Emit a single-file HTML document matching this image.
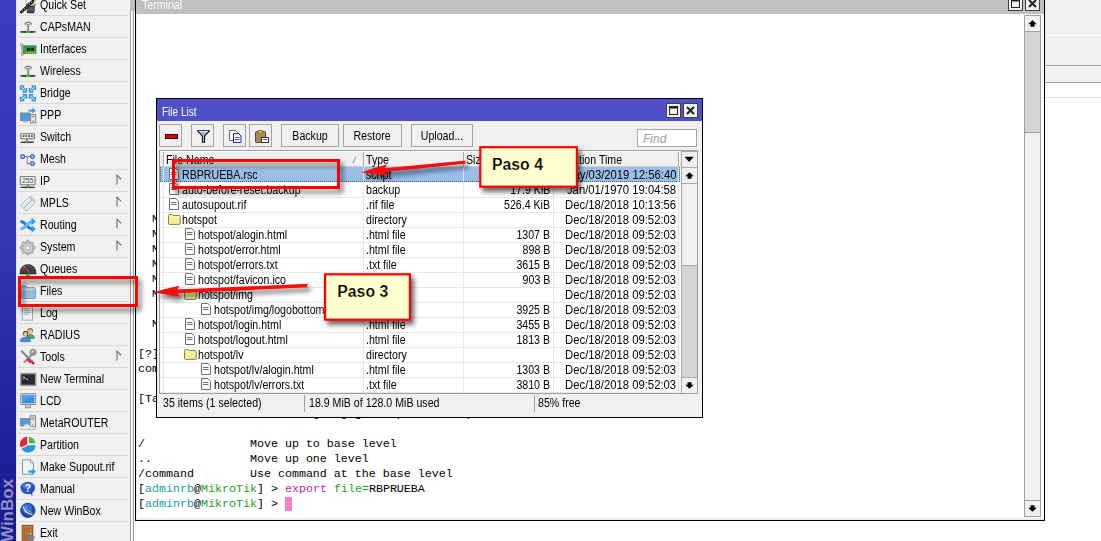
<!DOCTYPE html>
<html><head><meta charset="utf-8"><style>*{box-sizing:border-box}
html,body{margin:0;padding:0}
body{width:1101px;height:541px;overflow:hidden;position:relative;background:#fff;font-family:"Liberation Sans",sans-serif;font-size:12px;color:#000}
.a{position:absolute}
.t,.tr,.td{display:inline-block;white-space:nowrap;transform:scaleX(.885);transform-origin:0 0}
.tr{transform-origin:100% 0}
.td{transform:scaleX(.94);transform-origin:100% 0}
#bar{left:0;top:0;width:16px;height:541px;background:linear-gradient(#3c3cc2,#3535b4 45%,#2020a0 80%,#1a1a8a)}
#menu{left:16px;top:0;width:114px;height:541px;background:#f0f0f0;overflow:hidden;border-left:1px solid #e4e4ee}
.mi{position:absolute;left:0;width:114px;height:22px}
.ic{position:absolute;left:3px;top:4px;width:16px;height:16px}
.ic svg{display:block}
.mt{position:absolute;left:23px;top:1px;line-height:22px;white-space:nowrap}
.arr{position:absolute;left:99px;top:5px}
.sep{position:absolute;left:1px;width:110px;height:1px;background:#d9d9d9}
#term{left:135px;top:-1px;width:910px;height:522px;border:1px solid #000;background:#fff}
#ttitle{left:0;top:0;width:908px;height:14px;background:#c0c0c0;color:#fff}
pre.tt{position:absolute;left:2px;top:212px;margin:0;font-family:"Liberation Mono",monospace;font-size:11.67px;line-height:15px;color:#000}
.u{color:#14a0a0}.h{color:#1aa01a}.m{color:#c020c0}.k{color:#000}
.cur{background:#ff80c8}
#fl{left:156px;top:98px;width:547px;height:320px;border:1px solid #000;background:#f0f0f0}
#fltitle{left:0;top:0;width:545px;height:22px;background:#5050c8;color:#fff}
.btn{position:absolute;top:25px;height:23px;border:1px solid #a4a4a4;background:#f0f0f0;text-align:center;line-height:23px}
#list{left:2px;top:51px;width:539px;height:244px;border:1px solid #a0a0a0;background:#fff;overflow:hidden}
.row{position:absolute;left:0;width:519px;height:14px;line-height:14px;white-space:nowrap}
.c{position:absolute;top:0}
.fi{position:absolute}
.fi svg{display:block}
.tp{left:206px}
.sz{left:310px;width:80px;text-align:right}
.dt{left:316px;width:200px;text-align:right}
#status{left:2px;top:294px;width:539px;height:20px}

</style></head><body>
<div id="bar" class="a"></div>
<svg class="a" style="left:0;top:0" width="16" height="541" viewBox="0 0 16 541"><text transform="translate(13.4 542) rotate(-90)" font-family="Liberation Sans" font-weight="bold" font-size="17" fill="#8e8ec4">WinBox</text></svg>
<div class="a" style="left:16px;top:0;width:1px;height:541px;background:#fafafa"></div>
<div id="menu" class="a"><div class="mi" style="top:-7px"><span class="ic"><svg width="16" height="16" viewBox="0 0 16 16" style="overflow:visible"><path d="M6.2 7.8h9.2l-0.8 1v6.2q-0.2 1.2-1.4 1.2h-5q-1.2 0-1.4-1.2V8.8z" fill="#2e2e2e"/><ellipse cx="10.8" cy="7.8" rx="5" ry="1.3" fill="#cfcfcf" stroke="#333" stroke-width="0.6"/><rect x="7.2" y="10" width="7.2" height="4.6" fill="#565656"/><path d="M1.2 15.2L13.8 3.2" stroke="#111" stroke-width="2.6" stroke-linecap="round"/><path d="M1.8 14.6L13.2 3.8" stroke="#eee" stroke-width="0.9" stroke-dasharray="1.6 1.6"/><path d="M6 2.5l0.5 1 1 0.3-1 0.4-0.5 1-0.5-1-1-0.4 1-0.3z" fill="#e8c030"/><circle cx="15" cy="3.6" r="0.9" fill="#e8c030"/><circle cx="10" cy="1.8" r="0.6" fill="#e8c030"/></svg></span><span class="mt"><span class="t">Quick Set</span></span></div><div class="sep" style="top:15px"></div><div class="mi" style="top:15px"><span class="ic"><svg width="16" height="16" viewBox="0 0 16 16" style="overflow:visible"><path d="M4.6 5.4Q8.2 1 11.8 5.4" fill="none" stroke="#777" stroke-width="1.3"/><path d="M6.2 6.6Q8.2 4.4 10.2 6.6" fill="none" stroke="#888" stroke-width="1.1"/><rect x="7.5" y="6.6" width="1.4" height="6.2" fill="#6a6a6a"/><path d="M0.4 12.9Q8.2 11.8 15.4 12.9Q8.2 14 0.4 12.9z" fill="#222" stroke="#222" stroke-width="0.8"/><ellipse cx="8.2" cy="12.7" rx="2.4" ry="1.5" fill="#28c028"/></svg></span><span class="mt"><span class="t">CAPsMAN</span></span></div><div class="sep" style="top:37px"></div><div class="mi" style="top:37px"><span class="ic"><svg width="16" height="16" viewBox="0 0 16 16" style="overflow:visible"><path d="M0.5 3h2.5v11.5h-1.5V4.5h-1z" fill="#d8d8d8" stroke="#8a8a8a" stroke-width="0.7"/><rect x="3.5" y="4.8" width="12.5" height="7.8" fill="#30a040" stroke="#1a6a25" stroke-width="0.6"/><rect x="6.8" y="6.8" width="3.2" height="3" fill="#1a2a2a"/><rect x="10.8" y="6.8" width="3.2" height="3" fill="#1a2a2a"/><path d="M5.8 12h1.2M7.8 12h1.2M9.8 12h1.2M11.8 12h1.2M13.8 12h1.2" stroke="#e0c040" stroke-width="1.4"/></svg></span><span class="mt"><span class="t">Interfaces</span></span></div><div class="sep" style="top:59px"></div><div class="mi" style="top:59px"><span class="ic"><svg width="16" height="16" viewBox="0 0 16 16" style="overflow:visible"><path d="M4.6 5.4Q8.2 1 11.8 5.4" fill="none" stroke="#777" stroke-width="1.3"/><path d="M6.2 6.6Q8.2 4.4 10.2 6.6" fill="none" stroke="#888" stroke-width="1.1"/><rect x="7.5" y="6.6" width="1.4" height="6.2" fill="#6a6a6a"/><path d="M0.4 12.9Q8.2 11.8 15.4 12.9Q8.2 14 0.4 12.9z" fill="#222" stroke="#222" stroke-width="0.8"/><ellipse cx="8.2" cy="12.7" rx="2.4" ry="1.5" fill="#28c028"/></svg></span><span class="mt"><span class="t">Wireless</span></span></div><div class="sep" style="top:81px"></div><div class="mi" style="top:81px"><span class="ic"><svg width="16" height="16" viewBox="0 0 16 16" style="overflow:visible"><g transform="translate(0 0.6) scale(0.86)"><path d="M0.3 0.3h4.6l-1.3 1.3 2.8 2.8 1.3-1.3v4.6h-4.6l1.3-1.3-2.8-2.8-1.3 1.3z" fill="#58c0f4" stroke="#1a6ec8" stroke-width="0.9" stroke-linejoin="round"/><path d="M1.6 1.6L5.8 5.8" stroke="#b8ecff" stroke-width="1"/></g><g transform="translate(15.8 0.6) scale(-0.86 0.86)"><path d="M0.3 0.3h4.6l-1.3 1.3 2.8 2.8 1.3-1.3v4.6h-4.6l1.3-1.3-2.8-2.8-1.3 1.3z" fill="#58c0f4" stroke="#1a6ec8" stroke-width="0.9" stroke-linejoin="round"/><path d="M1.6 1.6L5.8 5.8" stroke="#b8ecff" stroke-width="1"/></g><g transform="translate(0 16.2) scale(0.86 -0.86)"><path d="M0.3 0.3h4.6l-1.3 1.3 2.8 2.8 1.3-1.3v4.6h-4.6l1.3-1.3-2.8-2.8-1.3 1.3z" fill="#58c0f4" stroke="#1a6ec8" stroke-width="0.9" stroke-linejoin="round"/><path d="M1.6 1.6L5.8 5.8" stroke="#b8ecff" stroke-width="1"/></g><g transform="translate(15.8 16.2) scale(-0.86 -0.86)"><path d="M0.3 0.3h4.6l-1.3 1.3 2.8 2.8 1.3-1.3v4.6h-4.6l1.3-1.3-2.8-2.8-1.3 1.3z" fill="#58c0f4" stroke="#1a6ec8" stroke-width="0.9" stroke-linejoin="round"/><path d="M1.6 1.6L5.8 5.8" stroke="#b8ecff" stroke-width="1"/></g></svg></span><span class="mt"><span class="t">Bridge</span></span></div><div class="sep" style="top:103px"></div><div class="mi" style="top:103px"><span class="ic"><svg width="16" height="16" viewBox="0 0 16 16" style="overflow:visible"><rect x="0.5" y="6" width="9.5" height="7.5" fill="#4a9ee0" stroke="#8a8a8a" stroke-width="1"/><rect x="3" y="13.5" width="4.5" height="1.8" fill="#aaa"/><rect x="10.5" y="7.5" width="5.3" height="8.5" fill="#e4e4e4" stroke="#777" stroke-width="0.8"/><rect x="11.5" y="9" width="3" height="1" fill="#888"/><circle cx="13" cy="14.3" r="0.8" fill="#2b2"/><path d="M8.5 3.6h4.8" stroke="#3a9ae8" stroke-width="2"/><path d="M12.3 0.8l3.6 2.8-3.6 2.8z" fill="#3a9ae8"/></svg></span><span class="mt"><span class="t">PPP</span></span></div><div class="sep" style="top:125px"></div><div class="mi" style="top:125px"><span class="ic"><svg width="16" height="16" viewBox="0 0 16 16" style="overflow:visible"><rect x="0.8" y="4.8" width="13.6" height="5" rx="0.8" fill="#f4f4f4" stroke="#6a6a6a" stroke-width="1.1"/><g fill="#2a2a2a"><rect x="2.6" y="6.3" width="1.8" height="1.5"/><rect x="5.4" y="6.3" width="1.8" height="1.5"/><rect x="8.2" y="6.3" width="1.8" height="1.5"/><rect x="11" y="6.3" width="1.8" height="1.5"/></g><rect x="6.6" y="9.8" width="1" height="2.6" fill="#444"/><path d="M0.6 13.2Q7.1 12.2 13.8 13.2Q7.1 14.2 0.6 13.2z" fill="#222" stroke="#222" stroke-width="0.7"/><circle cx="7.1" cy="13" r="1.3" fill="#28c028"/></svg></span><span class="mt"><span class="t">Switch</span></span></div><div class="sep" style="top:147px"></div><div class="mi" style="top:147px"><span class="ic"><svg width="16" height="16" viewBox="0 0 16 16" style="overflow:visible"><path d="M2.4 5.6h10M7.1 5.6v7h5.3" stroke="#8a8a8a" fill="none" stroke-width="1.1"/><g fill="#9ab0f0" stroke="#3050c8" stroke-width="1"><circle cx="2.6" cy="5.6" r="2.1"/><circle cx="12.4" cy="5.6" r="2.1"/><circle cx="12.4" cy="12.6" r="2.1"/></g></svg></span><span class="mt"><span class="t">Mesh</span></span></div><div class="sep" style="top:169px"></div><div class="mi" style="top:169px"><span class="ic"><svg width="16" height="16" viewBox="0 0 16 16" style="overflow:visible"><rect x="0.3" y="3.5" width="14.8" height="8.2" rx="0.8" fill="#f4f4f4" stroke="#7a7a7a" stroke-width="1.1"/><text x="7.7" y="9.9" font-size="7.2" text-anchor="middle" fill="#4a4a4a" font-family="Liberation Sans" letter-spacing="-0.2">255</text><rect x="7.2" y="11.7" width="1" height="2" fill="#444"/><path d="M0.5 14.3Q7.7 13.4 15 14.3Q7.7 15.2 0.5 14.3z" fill="#222" stroke="#222" stroke-width="0.7"/><circle cx="7.7" cy="14.1" r="1.2" fill="#28c028"/></svg></span><span class="mt"><span class="t">IP</span></span><svg class="arr" width="8" height="12" viewBox="0 0 8 12"><path d="M5 5.3L1 10.3" stroke="#fff" stroke-width="1"/><path d="M1 0.5v10M0.8 0.8l4.3 4.5" fill="none" stroke="#6a6a6a" stroke-width="1.1"/></svg></div><div class="sep" style="top:191px"></div><div class="mi" style="top:191px"><span class="ic"><svg width="16" height="16" viewBox="0 0 16 16" style="overflow:visible"><g fill="#e4f0f0" stroke="#98a8a8" stroke-width="0.8"><path d="M0.6 10.4L8.8 2.2l2.8-0.6 0.6 0.6-0.6 2.8-8.2 8.2z"/><path d="M3.6 13.4L11.8 5.2l2.8-0.6 0.6 0.6-0.6 2.8-8.2 8.2z"/></g><circle cx="10.6" cy="2.8" r="0.6" fill="#888"/><circle cx="13.6" cy="5.8" r="0.6" fill="#888"/></svg></span><span class="mt"><span class="t">MPLS</span></span><svg class="arr" width="8" height="12" viewBox="0 0 8 12"><path d="M5 5.3L1 10.3" stroke="#fff" stroke-width="1"/><path d="M1 0.5v10M0.8 0.8l4.3 4.5" fill="none" stroke="#6a6a6a" stroke-width="1.1"/></svg></div><div class="sep" style="top:213px"></div><div class="mi" style="top:213px"><span class="ic"><svg width="16" height="16" viewBox="0 0 16 16" style="overflow:visible"><path d="M0.5 4.5C6 4.5 7.5 12 12.5 12" stroke="#1a80e0" stroke-width="3" fill="none"/><path d="M0.5 12C6 12 7.5 4.5 12.5 4.5" stroke="#60b8f8" stroke-width="3" fill="none"/><path d="M11.5 0.8l4.5 3.7-4.5 3.7z" fill="#3a9af0"/><path d="M11.5 8.3l4.5 3.7-4.5 3.7z" fill="#3a9af0"/></svg></span><span class="mt"><span class="t">Routing</span></span><svg class="arr" width="8" height="12" viewBox="0 0 8 12"><path d="M5 5.3L1 10.3" stroke="#fff" stroke-width="1"/><path d="M1 0.5v10M0.8 0.8l4.3 4.5" fill="none" stroke="#6a6a6a" stroke-width="1.1"/></svg></div><div class="sep" style="top:235px"></div><div class="mi" style="top:235px"><span class="ic"><svg width="16" height="16" viewBox="0 0 16 16" style="overflow:visible"><g transform="translate(7.7 8.7)"><circle r="5.2" fill="#c8c8c8" stroke="#8a8a8a" stroke-width="0.8"/><rect x="-1.6" y="-7.3" width="3.2" height="3" rx="0.6" fill="#c8c8c8" stroke="#8a8a8a" stroke-width="0.7" transform="rotate(0)"/><rect x="-1.6" y="-7.3" width="3.2" height="3" rx="0.6" fill="#c8c8c8" stroke="#8a8a8a" stroke-width="0.7" transform="rotate(45)"/><rect x="-1.6" y="-7.3" width="3.2" height="3" rx="0.6" fill="#c8c8c8" stroke="#8a8a8a" stroke-width="0.7" transform="rotate(90)"/><rect x="-1.6" y="-7.3" width="3.2" height="3" rx="0.6" fill="#c8c8c8" stroke="#8a8a8a" stroke-width="0.7" transform="rotate(135)"/><rect x="-1.6" y="-7.3" width="3.2" height="3" rx="0.6" fill="#c8c8c8" stroke="#8a8a8a" stroke-width="0.7" transform="rotate(180)"/><rect x="-1.6" y="-7.3" width="3.2" height="3" rx="0.6" fill="#c8c8c8" stroke="#8a8a8a" stroke-width="0.7" transform="rotate(225)"/><rect x="-1.6" y="-7.3" width="3.2" height="3" rx="0.6" fill="#c8c8c8" stroke="#8a8a8a" stroke-width="0.7" transform="rotate(270)"/><rect x="-1.6" y="-7.3" width="3.2" height="3" rx="0.6" fill="#c8c8c8" stroke="#8a8a8a" stroke-width="0.7" transform="rotate(315)"/><circle r="4.5" fill="#d0d0d0"/><circle r="1.9" fill="#fff" stroke="#888" stroke-width="0.6"/></g></svg></span><span class="mt"><span class="t">System</span></span><svg class="arr" width="8" height="12" viewBox="0 0 8 12"><path d="M5 5.3L1 10.3" stroke="#fff" stroke-width="1"/><path d="M1 0.5v10M0.8 0.8l4.3 4.5" fill="none" stroke="#6a6a6a" stroke-width="1.1"/></svg></div><div class="sep" style="top:257px"></div><div class="mi" style="top:257px"><span class="ic"><svg width="16" height="16" viewBox="0 0 16 16" style="overflow:visible"><path d="M0 11.5A8 8 0 0 1 16 11.5V13H0z" fill="#3a3e48" stroke="#1a1a1a" stroke-width="0.6"/><g fill="#bbb"><circle cx="3" cy="8" r="0.5"/><circle cx="5.2" cy="5.3" r="0.5"/><circle cx="8" cy="4.3" r="0.5"/><circle cx="10.8" cy="5.3" r="0.5"/><circle cx="13" cy="8" r="0.5"/></g><path d="M3.2 5L9.8 12" stroke="#e83030" stroke-width="1.2"/><ellipse cx="7.8" cy="14" rx="2.4" ry="1.2" fill="#28c028"/></svg></span><span class="mt"><span class="t">Queues</span></span></div><div class="sep" style="top:279px"></div><div class="mi" style="top:279px"><span class="ic"><svg width="16" height="16" viewBox="0 0 16 16" style="overflow:visible"><path d="M1.2 4.2q0-1.2 1.2-1.2h3.5l1.4 1.5h6.9q1.2 0 1.2 1.2v8.6q0 1.2-1.2 1.2h-11.8q-1.2 0-1.2-1.2z" fill="#9bbcd8" stroke="#6a8aa8" stroke-width="0.8"/><path d="M1.2 6.2h14.4" stroke="#c8dcec" stroke-width="1"/></svg></span><span class="mt"><span class="t">Files</span></span></div><div class="sep" style="top:301px"></div><div class="mi" style="top:301px"><span class="ic"><svg width="16" height="16" viewBox="0 0 16 16" style="overflow:visible"><path d="M2.3 0.5h10.2v15.2l-1.3-1-1.2 1-1.3-1-1.2 1-1.3-1-1.2 1-1.3-1-1.4 1z" fill="#eef4f4" stroke="#8a9a9a" stroke-width="0.8"/><g stroke="#a8b8c0" stroke-width="0.8"><path d="M4 3.5h6.5M4 5.5h5M4 7.5h6.5M4 9.5h4"/></g></svg></span><span class="mt"><span class="t">Log</span></span></div><div class="sep" style="top:323px"></div><div class="mi" style="top:323px"><span class="ic"><svg width="16" height="16" viewBox="0 0 16 16" style="overflow:visible"><circle cx="10.2" cy="3.8" r="2.8" fill="#a05828"/><circle cx="10.2" cy="4.4" r="2.1" fill="#f4c8a0"/><path d="M6 11.5q0-4 4.2-4 4.2 0 4.2 4z" fill="#40b060" stroke="#2a8040" stroke-width="0.6"/><circle cx="5.4" cy="6.5" r="2.6" fill="#302820"/><circle cx="5.4" cy="7.1" r="2.1" fill="#f0c098"/><path d="M0.3 14.7q0-4.5 5.1-4.5 5.1 0 5.1 4.5z" fill="#4a90d8" stroke="#2a60a8" stroke-width="0.6"/></svg></span><span class="mt"><span class="t">RADIUS</span></span></div><div class="sep" style="top:345px"></div><div class="mi" style="top:345px"><span class="ic"><svg width="16" height="16" viewBox="0 0 16 16" style="overflow:visible"><path d="M1.5 2L12.5 13" stroke="#8a8a8a" stroke-width="2.2"/><path d="M0.8 1.3l2.2 0.6-1.1 1.1z" fill="#666"/><path d="M15 2.5L4 13.5" stroke="#909090" stroke-width="2.2"/><circle cx="13" cy="3.3" r="2.6" fill="none" stroke="#909090" stroke-width="1.8"/><path d="M7.5 10L11 13.5" stroke="#e02828" stroke-width="2.8"/><path d="M11.5 12.5l2.5 2.5" stroke="#c02020" stroke-width="2.4"/></svg></span><span class="mt"><span class="t">Tools</span></span><svg class="arr" width="8" height="12" viewBox="0 0 8 12"><path d="M5 5.3L1 10.3" stroke="#fff" stroke-width="1"/><path d="M1 0.5v10M0.8 0.8l4.3 4.5" fill="none" stroke="#6a6a6a" stroke-width="1.1"/></svg></div><div class="sep" style="top:367px"></div><div class="mi" style="top:367px"><span class="ic"><svg width="16" height="16" viewBox="0 0 16 16" style="overflow:visible"><rect x="0.7" y="2.5" width="15" height="12" rx="0.6" fill="#3a3a3a" stroke="#9a9a9a" stroke-width="1.4"/><rect x="2" y="3.8" width="12.4" height="9.4" fill="#2c2c30"/><path d="M3 5.5l2 1.2-2 1.2M5.5 8h2.5" stroke="#e8e8e8" stroke-width="0.8" fill="none"/></svg></span><span class="mt"><span class="t">New Terminal</span></span></div><div class="sep" style="top:389px"></div><div class="mi" style="top:389px"><span class="ic"><svg width="16" height="16" viewBox="0 0 16 16" style="overflow:visible"><rect x="0.7" y="0.7" width="15" height="10.8" rx="0.6" fill="#d8d8d8" stroke="#8a8a8a" stroke-width="1"/><rect x="2" y="2" width="12.4" height="8.2" fill="#3c90e0"/><path d="M2 8Q8 4 14.4 5V2H2z" fill="#5aa8f0" opacity="0.6"/><rect x="5.4" y="11.4" width="5" height="3.4" fill="#c8c8c8" stroke="#888" stroke-width="0.8"/></svg></span><span class="mt"><span class="t">LCD</span></span></div><div class="sep" style="top:411px"></div><div class="mi" style="top:411px"><span class="ic"><svg width="16" height="16" viewBox="0 0 16 16" style="overflow:visible"><rect x="0.5" y="3.5" width="9" height="7" fill="#4a9ee0" stroke="#8a8a8a" stroke-width="1"/><rect x="10" y="0.8" width="5.6" height="11" fill="#e4e4e4" stroke="#777" stroke-width="0.8"/><rect x="11" y="2.3" width="3.5" height="0.9" fill="#888"/><rect x="11" y="4" width="3.5" height="0.9" fill="#888"/><circle cx="12.8" cy="10" r="0.7" fill="#2b2"/><path d="M0.6 14.4q0-3 2.8-3 0.8-2.6 3.8-2.4 2.6 0.2 3 2.4 3.2-0.4 4.4 1.6 0.8 1.4 0.8 1.4z" fill="#e8eaf0" stroke="#a0a4b0" stroke-width="0.7"/></svg></span><span class="mt"><span class="t">MetaROUTER</span></span></div><div class="sep" style="top:433px"></div><div class="mi" style="top:433px"><span class="ic"><svg width="16" height="16" viewBox="0 0 16 16" style="overflow:visible"><path d="M8.6 6.6V-0.3A7 7 0 0 1 15.5 6.6z" fill="#48b838" stroke="#fff" stroke-width="0.4"/><path d="M8.4 8.2h7.2A7.4 7.4 0 0 1 1.6 11.4z" fill="#2a98d8"/><path d="M7.2 7.4L0.8 10.6A7.4 7.4 0 0 1 7.2 -0.2z" fill="#e02838"/></svg></span><span class="mt"><span class="t">Partition</span></span></div><div class="sep" style="top:455px"></div><div class="mi" style="top:455px"><span class="ic"><svg width="16" height="16" viewBox="0 0 16 16" style="overflow:visible"><path d="M2.5 0.8h8l3 3v11.4h-11z" fill="#eef6f8" stroke="#7a8a90" stroke-width="0.9"/><path d="M10.5 0.8v3h3" fill="#fff" stroke="#7a8a90" stroke-width="0.8"/><path d="M8.5 12.5h4.5" stroke="#2a9ae8" stroke-width="2.4"/><path d="M12.3 9.6l3.7 2.9-3.7 2.9z" fill="#2a9ae8"/></svg></span><span class="mt"><span class="t">Make Supout.rif</span></span></div><div class="sep" style="top:477px"></div><div class="mi" style="top:477px"><span class="ic"><svg width="16" height="16" viewBox="0 0 16 16" style="overflow:visible"><ellipse cx="7.8" cy="7" rx="7.3" ry="6.2" fill="#2850c8"/><path d="M9.5 12l3 3.2-0.5-4z" fill="#2850c8"/><ellipse cx="7" cy="4.8" rx="5" ry="3" fill="#5a80e8" opacity="0.7"/><text x="7.8" y="10.8" font-size="10" font-weight="bold" text-anchor="middle" fill="#fff" font-family="Liberation Sans">?</text></svg></span><span class="mt"><span class="t">Manual</span></span></div><div class="sep" style="top:499px"></div><div class="mi" style="top:499px"><span class="ic"><svg width="16" height="16" viewBox="0 0 16 16" style="overflow:visible"><circle cx="7.8" cy="7.4" r="7.3" fill="#1a4aa8" stroke="#0a2a70" stroke-width="0.5"/><circle cx="7" cy="5.5" r="5" fill="#3a78d8" opacity="0.8"/><path d="M3.5 3.5Q4.5 10.5 12.5 11.5" stroke="#e8f0ff" stroke-width="1.2" fill="none"/><path d="M5.5 3Q6.5 8.5 12.5 9.5" stroke="#c8d8f0" stroke-width="0.6" fill="none"/></svg></span><span class="mt"><span class="t">New WinBox</span></span></div><div class="sep" style="top:521px"></div><div class="mi" style="top:521px"><span class="ic"><svg width="16" height="16" viewBox="0 0 16 16" style="overflow:visible"><rect x="2.2" y="0.3" width="10.7" height="16" fill="#c07838" stroke="#804818" stroke-width="0.9"/><path d="M4.5 2v13M7 2v13M9.5 2v13" stroke="#a05a20" stroke-width="0.7"/><circle cx="10.5" cy="8.5" r="0.8" fill="#f0e0a0"/><path d="M9 12.5h5.6" stroke="#2a9ae8" stroke-width="2.2"/><path d="M10.5 9.8l-3.5 2.7 3.5 2.7z" fill="#2a9ae8"/></svg></span><span class="mt"><span class="t">Exit</span></span></div><div class="sep" style="top:543px"></div></div>
<div class="a" style="left:130px;top:0;width:5px;height:11px;background:#c0c0c0"></div>
<div class="a" style="left:130px;top:11px;width:1px;height:530px;background:#a0a0a0"></div>
<div class="a" style="left:131px;top:11px;width:3px;height:530px;background:#f0f0f0;border-left:1px solid #fff"></div>
<div class="a" style="left:133px;top:11px;width:1px;height:530px;background:#a0a0a0"></div>
<div class="a" style="left:1044px;top:0;width:57px;height:541px;background:#fff"></div>
<div class="a" style="left:1044px;top:0;width:57px;height:66px;background:#f0f0f0"></div>
<div class="a" style="left:1044px;top:35px;width:57px;height:1px;background:#fff"></div>
<div class="a" style="left:1044px;top:65px;width:57px;height:1px;background:#a0a0a0"></div>
<div class="a" style="left:1044px;top:66px;width:57px;height:16px;background:#f0f0f0"></div>
<div class="a" style="left:1044px;top:82px;width:57px;height:1px;background:#a0a0a0"></div>
<div class="a" style="left:1044px;top:97px;width:57px;height:1px;background:#e0e0e0"></div>
<div id="term" class="a">
 <div id="ttitle" class="a"><span class="a t" style="left:6px;top:-2px;line-height:14px;font-size:12px">Terminal</span></div>
 <div class="a" style="left:0;top:14px;width:908px;height:506px;border-left:1px solid #ececec;border-bottom:2px solid #ececec"></div>
 <pre class="tt">  MMM      MMM       KKK                          TTTTTTTTTTT      KKK
  MMMM    MMMM       KKK                          TTTTTTTTTTT      KKK
  MMM MMMM MMM  III  KKK  KKK  RRRRRR     OOOOOO      TTT     III  KKK  KKK
  MMM  MM  MMM  III  KKKKK     RRR  RRR  OOO  OOO     TTT     III  KKKKK
  MMM      MMM  III  KKK KKK   RRRRRR    OOO  OOO     TTT     III  KKK KKK
  MMM      MMM  III  KKK  KKK  RRR  RRR   OOOOOO      TTT     III  KKK  KKK

  MikroTik RouterOS 6.42.3 (c) 1999-2018       www.mikrotik.com

[?]             Gives the list of available commands
command [?]     Gives help on the command and list of arguments

[Tab]           Completes the command/word. If the input is ambiguous,
                a second [Tab] gives possible options

/               Move up to base level
..              Move up one level
/command        Use command at the base level
<span class="k">[</span><span class="u">adminrb</span><span class="k">@</span><span class="h">MikroTik</span><span class="k">] &gt; </span><span class="m">export</span> <span class="h">file=</span>RBPRUEBA
<span class="k">[</span><span class="u">adminrb</span><span class="k">@</span><span class="h">MikroTik</span><span class="k">] &gt; </span><span class="cur"> </span></pre>
 <div class="a" style="left:888px;top:15px;width:17px;height:502px;background:#f0f0f0;border:1px solid #a0a0a0"></div>
 <div class="a" style="left:889px;top:32px;width:15px;height:101px;background:#d4d4d4;border-bottom:1px solid #a0a0a0"></div>
 <div class="a" style="left:888px;top:15px;width:17px;height:17px;background:#f0f0f0;border:1px solid #a0a0a0"></div>
 <svg class="a" style="left:892px;top:20px" width="9" height="7" viewBox="0 0 9 7"><path d="M4.5 0.2L8.8 4.2H6.5V6.8h-4V4.2H0.2z" fill="#000"/></svg>
 <div class="a" style="left:888px;top:500px;width:17px;height:17px;background:#f0f0f0;border:1px solid #a0a0a0"></div>
 <svg class="a" style="left:892px;top:505px" width="9" height="7" viewBox="0 0 9 7"><path d="M4.5 6.8L8.8 2.8H6.5V0.2h-4V2.8H0.2z" fill="#000"/></svg>
 <div class="a" style="left:872px;top:-4px;width:15px;height:15px;background:#f0f0f0;border:1px solid #404040"></div>
 <svg class="a" style="left:875px;top:-1px" width="9" height="9" viewBox="0 0 9 9"><rect x="0.5" y="0.5" width="8" height="8" fill="none" stroke="#222" stroke-width="1"/><rect x="0.5" y="0.5" width="8" height="2" fill="#222"/></svg>
 <div class="a" style="left:889px;top:-4px;width:15px;height:15px;background:#f0f0f0;border:1px solid #404040"></div>
 <svg class="a" style="left:892px;top:-1px" width="9" height="9" viewBox="0 0 9 9"><path d="M1 1L8 8M8 1L1 8" stroke="#222" stroke-width="2"/></svg>
</div>
<div id="fl" class="a">
 <div id="fltitle" class="a"><span class="a t" style="left:5px;top:6px;font-size:12.5px;line-height:14px;transform:scaleX(.8)">File List</span></div>
 <div class="btn" style="left:2px;width:23px"></div>
 <div class="btn" style="left:34px;width:23px"></div>
 <div class="btn" style="left:66px;width:23px"></div>
 <div class="btn" style="left:92px;width:23px"></div>
 <div class="btn" style="left:124px;width:58px"><span class="t" style="transform-origin:50% 0">Backup</span></div>
 <div class="btn" style="left:186px;width:59px"><span class="t" style="transform-origin:50% 0">Restore</span></div>
 <div class="btn" style="left:254px;width:62px"><span class="t" style="transform-origin:50% 0">Upload...</span></div>
 <svg class="a" style="left:8px;top:35px" width="13" height="5" viewBox="0 0 13 5"><rect x="0.5" y="0.5" width="12" height="4" fill="#e00000" stroke="#300" stroke-width="1"/></svg>
 <svg class="a" style="left:40px;top:31px" width="13" height="13" viewBox="0 0 13 13"><path d="M0.5 0.8H12.5L7.6 5.8V12.3H5.4V5.8Z" fill="#a9b9dc" stroke="#111" stroke-width="1.1" stroke-linejoin="round"/><path d="M2 1.5H11" stroke="#dfe6f5" stroke-width="1"/></svg>
 <svg class="a" style="left:72px;top:31px" width="13" height="13" viewBox="0 0 13 13"><path d="M0.5 0.5h6l2 2v8h-8z" fill="#fff" stroke="#666" stroke-width="1"/><path d="M4.5 3.5h5l2.5 2.5v6.5h-7.5z" fill="#fff" stroke="#1a2a80" stroke-width="1"/><path d="M6 7.5h4.5M6 9.5h4.5" stroke="#3a5ac0" stroke-width="1"/></svg>
 <svg class="a" style="left:98px;top:31px" width="14" height="13" viewBox="0 0 14 13"><rect x="0.5" y="1.5" width="10" height="11" rx="1" fill="#a48a5c" stroke="#5a4a2a" stroke-width="1"/><rect x="3.5" y="0.5" width="4" height="2.5" fill="#e8c850" stroke="#8a7020" stroke-width="0.8"/><rect x="6.5" y="7.5" width="7" height="5" fill="#fff" stroke="#333" stroke-width="1"/><path d="M8 9.5h4" stroke="#555" stroke-width="1"/></svg>
 <div class="a" style="left:509px;top:4px;width:15px;height:15px;background:#f0f0f0;border:1px solid #404040"></div>
 <svg class="a" style="left:512px;top:7px" width="9" height="9" viewBox="0 0 9 9"><rect x="0.5" y="0.5" width="8" height="8" fill="none" stroke="#222" stroke-width="1"/><rect x="0.5" y="0.5" width="8" height="2" fill="#222"/></svg>
 <div class="a" style="left:526px;top:4px;width:15px;height:15px;background:#f0f0f0;border:1px solid #404040"></div>
 <svg class="a" style="left:529px;top:7px" width="9" height="9" viewBox="0 0 9 9"><path d="M1 1L8 8M8 1L1 8" stroke="#222" stroke-width="2"/></svg>
 <div class="a" style="left:480px;top:30px;width:60px;height:18px;background:#fff;border:1px solid #a8a8a8"><span class="a" style="left:5px;top:1px;line-height:16px;font-style:italic;color:#a0a0a0;font-size:12px">Find</span></div>
 <div id="list" class="a">
  <div class="a" style="left:0;top:0;width:539px;height:16px;background:#f0f0f0;border-bottom:1px solid #d0d0d0;border-top:1px solid #fff"><span class="c" style="left:6px;line-height:16px"><span class="t">File Name</span></span><span class="c" style="left:206px;line-height:16px"><span class="t">Type</span></span><span class="c" style="left:306px;line-height:16px"><span class="t">Size</span></span><span class="c" style="left:396px;line-height:16px"><span class="t">Creation Time</span></span></div>
  <div class="a" style="left:3px;top:1px;width:1px;height:15px;background:#a8a8a8"></div><div class="a" style="left:4px;top:1px;width:1px;height:15px;background:#fff"></div>
  <div class="a" style="left:203px;top:1px;width:1px;height:15px;background:#a8a8a8"></div><div class="a" style="left:204px;top:1px;width:1px;height:15px;background:#fff"></div>
  <div class="a" style="left:303px;top:1px;width:1px;height:15px;background:#a8a8a8"></div><div class="a" style="left:304px;top:1px;width:1px;height:15px;background:#fff"></div>
  <div class="a" style="left:393px;top:1px;width:1px;height:15px;background:#a8a8a8"></div><div class="a" style="left:394px;top:1px;width:1px;height:15px;background:#fff"></div>
  <div class="a" style="left:518px;top:1px;width:1px;height:15px;background:#a8a8a8"></div><div class="a" style="left:519px;top:1px;width:1px;height:15px;background:#fff"></div>
  <svg class="a" style="left:192px;top:5px" width="8" height="8" viewBox="0 0 8 8"><path d="M0.8 7.2L4 0.8 7.5 7.2z" fill="none" stroke="#fff" stroke-width="1"/><path d="M0.8 7.2L4 0.8" fill="none" stroke="#8a8a8a" stroke-width="1"/></svg>
  <div class="a" style="left:0;top:16px;width:520px;height:15px;background:#99bee8"></div>
<div class="a" style="left:519px;top:16px;width:1px;height:15px;background:repeating-linear-gradient(180deg,#5a5a5a 0 1px,transparent 1px 2px)"></div>
<div class="a" style="left:0;top:30px;width:520px;height:1px;background:repeating-linear-gradient(90deg,#5a5a5a 0 1px,transparent 1px 2px)"></div>
<div class="a" style="left:0;top:16px;width:1px;height:15px;background:repeating-linear-gradient(180deg,#5a5a5a 0 1px,transparent 1px 2px)"></div>
<div class="a" style="left:0;top:46px;width:519px;height:1px;background:#e8e8e8"></div>
<div class="a" style="left:0;top:61px;width:519px;height:1px;background:#e8e8e8"></div>
<div class="a" style="left:0;top:76px;width:519px;height:1px;background:#e8e8e8"></div>
<div class="a" style="left:0;top:91px;width:519px;height:1px;background:#e8e8e8"></div>
<div class="a" style="left:0;top:106px;width:519px;height:1px;background:#e8e8e8"></div>
<div class="a" style="left:0;top:121px;width:519px;height:1px;background:#e8e8e8"></div>
<div class="a" style="left:0;top:136px;width:519px;height:1px;background:#e8e8e8"></div>
<div class="a" style="left:0;top:151px;width:519px;height:1px;background:#e8e8e8"></div>
<div class="a" style="left:0;top:166px;width:519px;height:1px;background:#e8e8e8"></div>
<div class="a" style="left:0;top:181px;width:519px;height:1px;background:#e8e8e8"></div>
<div class="a" style="left:0;top:196px;width:519px;height:1px;background:#e8e8e8"></div>
<div class="a" style="left:0;top:211px;width:519px;height:1px;background:#e8e8e8"></div>
<div class="a" style="left:0;top:226px;width:519px;height:1px;background:#e8e8e8"></div>
<div class="a" style="left:0;top:241px;width:519px;height:1px;background:#e8e8e8"></div>
<span class="fi" style="left:9px;top:17px"><svg width="10" height="12" viewBox="0 0 10 12"><path d="M0.5 0.5h6.3l2.7 2.7v8.3h-9z" fill="#fff" stroke="#6e6e6e" stroke-width="1"/><path d="M2 4.5h5.5M2 6.5h5.5" stroke="#6e6e6e" stroke-width="1"/></svg></span>
<div class="row" style="top:17px"><span class="c" style="left:22px"><span class="t">RBPRUEBA.rsc</span></span><span class="c tp"><span class="t">script</span></span><span class="c sz"><span class="tr"></span></span><span class="c dt"><span class="td">May/03/2019 12:56:40</span></span></div>
<span class="fi" style="left:9px;top:32px"><svg width="10" height="12" viewBox="0 0 10 12"><path d="M0.5 0.5h6.3l2.7 2.7v8.3h-9z" fill="#fff" stroke="#6e6e6e" stroke-width="1"/><path d="M2 4.5h5.5M2 6.5h5.5" stroke="#6e6e6e" stroke-width="1"/></svg></span>
<div class="row" style="top:32px"><span class="c" style="left:22px"><span class="t">auto-before-reset.backup</span></span><span class="c tp"><span class="t">backup</span></span><span class="c sz"><span class="tr">17.9 KiB</span></span><span class="c dt"><span class="td">Jan/01/1970 19:04:58</span></span></div>
<span class="fi" style="left:9px;top:47px"><svg width="10" height="12" viewBox="0 0 10 12"><path d="M0.5 0.5h6.3l2.7 2.7v8.3h-9z" fill="#fff" stroke="#6e6e6e" stroke-width="1"/><path d="M2 4.5h5.5M2 6.5h5.5" stroke="#6e6e6e" stroke-width="1"/></svg></span>
<div class="row" style="top:47px"><span class="c" style="left:22px"><span class="t">autosupout.rif</span></span><span class="c tp"><span class="t">.rif file</span></span><span class="c sz"><span class="tr">526.4 KiB</span></span><span class="c dt"><span class="td">Dec/18/2018 10:13:56</span></span></div>
<span class="fi" style="left:8px;top:63px"><svg width="13" height="11" viewBox="0 0 13 11"><path d="M0.5 1.5q0-1 1-1h3q0.8 0 1 1h5.8q1 0 1 1v6.9q0 1-1 1h-9.8q-1 0-1-1z" fill="#f2ee94" stroke="#8a8440" stroke-width="1"/><path d="M1.5 3h9.8" stroke="#faf8c8" stroke-width="1"/></svg></span>
<div class="row" style="top:62px"><span class="c" style="left:22px"><span class="t">hotspot</span></span><span class="c tp"><span class="t">directory</span></span><span class="c sz"><span class="tr"></span></span><span class="c dt"><span class="td">Dec/18/2018 09:52:03</span></span></div>
<span class="fi" style="left:25px;top:77px"><svg width="10" height="12" viewBox="0 0 10 12"><path d="M0.5 0.5h6.3l2.7 2.7v8.3h-9z" fill="#fff" stroke="#6e6e6e" stroke-width="1"/><path d="M2 4.5h5.5M2 6.5h5.5" stroke="#6e6e6e" stroke-width="1"/></svg></span>
<div class="row" style="top:77px"><span class="c" style="left:38px"><span class="t">hotspot/alogin.html</span></span><span class="c tp"><span class="t">.html file</span></span><span class="c sz"><span class="tr">1307 B</span></span><span class="c dt"><span class="td">Dec/18/2018 09:52:03</span></span></div>
<span class="fi" style="left:25px;top:92px"><svg width="10" height="12" viewBox="0 0 10 12"><path d="M0.5 0.5h6.3l2.7 2.7v8.3h-9z" fill="#fff" stroke="#6e6e6e" stroke-width="1"/><path d="M2 4.5h5.5M2 6.5h5.5" stroke="#6e6e6e" stroke-width="1"/></svg></span>
<div class="row" style="top:92px"><span class="c" style="left:38px"><span class="t">hotspot/error.html</span></span><span class="c tp"><span class="t">.html file</span></span><span class="c sz"><span class="tr">898 B</span></span><span class="c dt"><span class="td">Dec/18/2018 09:52:03</span></span></div>
<span class="fi" style="left:25px;top:107px"><svg width="10" height="12" viewBox="0 0 10 12"><path d="M0.5 0.5h6.3l2.7 2.7v8.3h-9z" fill="#fff" stroke="#6e6e6e" stroke-width="1"/><path d="M2 4.5h5.5M2 6.5h5.5" stroke="#6e6e6e" stroke-width="1"/></svg></span>
<div class="row" style="top:107px"><span class="c" style="left:38px"><span class="t">hotspot/errors.txt</span></span><span class="c tp"><span class="t">.txt file</span></span><span class="c sz"><span class="tr">3615 B</span></span><span class="c dt"><span class="td">Dec/18/2018 09:52:03</span></span></div>
<span class="fi" style="left:25px;top:122px"><svg width="10" height="12" viewBox="0 0 10 12"><path d="M0.5 0.5h6.3l2.7 2.7v8.3h-9z" fill="#fff" stroke="#6e6e6e" stroke-width="1"/><path d="M2 4.5h5.5M2 6.5h5.5" stroke="#6e6e6e" stroke-width="1"/></svg></span>
<div class="row" style="top:122px"><span class="c" style="left:38px"><span class="t">hotspot/favicon.ico</span></span><span class="c tp"><span class="t">.ico file</span></span><span class="c sz"><span class="tr">903 B</span></span><span class="c dt"><span class="td">Dec/18/2018 09:52:03</span></span></div>
<span class="fi" style="left:24px;top:138px"><svg width="13" height="11" viewBox="0 0 13 11"><path d="M0.5 1.5q0-1 1-1h3q0.8 0 1 1h5.8q1 0 1 1v6.9q0 1-1 1h-9.8q-1 0-1-1z" fill="#f2ee94" stroke="#8a8440" stroke-width="1"/><path d="M1.5 3h9.8" stroke="#faf8c8" stroke-width="1"/></svg></span>
<div class="row" style="top:137px"><span class="c" style="left:38px"><span class="t">hotspot/img</span></span><span class="c tp"><span class="t">directory</span></span><span class="c sz"><span class="tr"></span></span><span class="c dt"><span class="td">Dec/18/2018 09:52:03</span></span></div>
<span class="fi" style="left:41px;top:152px"><svg width="10" height="12" viewBox="0 0 10 12"><path d="M0.5 0.5h6.3l2.7 2.7v8.3h-9z" fill="#fff" stroke="#6e6e6e" stroke-width="1"/><path d="M2 4.5h5.5M2 6.5h5.5" stroke="#6e6e6e" stroke-width="1"/></svg></span>
<div class="row" style="top:152px"><span class="c" style="left:54px"><span class="t">hotspot/img/logobottom.png</span></span><span class="c tp"><span class="t">.png file</span></span><span class="c sz"><span class="tr">3925 B</span></span><span class="c dt"><span class="td">Dec/18/2018 09:52:03</span></span></div>
<span class="fi" style="left:25px;top:167px"><svg width="10" height="12" viewBox="0 0 10 12"><path d="M0.5 0.5h6.3l2.7 2.7v8.3h-9z" fill="#fff" stroke="#6e6e6e" stroke-width="1"/><path d="M2 4.5h5.5M2 6.5h5.5" stroke="#6e6e6e" stroke-width="1"/></svg></span>
<div class="row" style="top:167px"><span class="c" style="left:38px"><span class="t">hotspot/login.html</span></span><span class="c tp"><span class="t">.html file</span></span><span class="c sz"><span class="tr">3455 B</span></span><span class="c dt"><span class="td">Dec/18/2018 09:52:03</span></span></div>
<span class="fi" style="left:25px;top:182px"><svg width="10" height="12" viewBox="0 0 10 12"><path d="M0.5 0.5h6.3l2.7 2.7v8.3h-9z" fill="#fff" stroke="#6e6e6e" stroke-width="1"/><path d="M2 4.5h5.5M2 6.5h5.5" stroke="#6e6e6e" stroke-width="1"/></svg></span>
<div class="row" style="top:182px"><span class="c" style="left:38px"><span class="t">hotspot/logout.html</span></span><span class="c tp"><span class="t">.html file</span></span><span class="c sz"><span class="tr">1813 B</span></span><span class="c dt"><span class="td">Dec/18/2018 09:52:03</span></span></div>
<span class="fi" style="left:24px;top:198px"><svg width="13" height="11" viewBox="0 0 13 11"><path d="M0.5 1.5q0-1 1-1h3q0.8 0 1 1h5.8q1 0 1 1v6.9q0 1-1 1h-9.8q-1 0-1-1z" fill="#f2ee94" stroke="#8a8440" stroke-width="1"/><path d="M1.5 3h9.8" stroke="#faf8c8" stroke-width="1"/></svg></span>
<div class="row" style="top:197px"><span class="c" style="left:38px"><span class="t">hotspot/lv</span></span><span class="c tp"><span class="t">directory</span></span><span class="c sz"><span class="tr"></span></span><span class="c dt"><span class="td">Dec/18/2018 09:52:03</span></span></div>
<span class="fi" style="left:41px;top:212px"><svg width="10" height="12" viewBox="0 0 10 12"><path d="M0.5 0.5h6.3l2.7 2.7v8.3h-9z" fill="#fff" stroke="#6e6e6e" stroke-width="1"/><path d="M2 4.5h5.5M2 6.5h5.5" stroke="#6e6e6e" stroke-width="1"/></svg></span>
<div class="row" style="top:212px"><span class="c" style="left:54px"><span class="t">hotspot/lv/alogin.html</span></span><span class="c tp"><span class="t">.html file</span></span><span class="c sz"><span class="tr">1303 B</span></span><span class="c dt"><span class="td">Dec/18/2018 09:52:03</span></span></div>
<span class="fi" style="left:41px;top:227px"><svg width="10" height="12" viewBox="0 0 10 12"><path d="M0.5 0.5h6.3l2.7 2.7v8.3h-9z" fill="#fff" stroke="#6e6e6e" stroke-width="1"/><path d="M2 4.5h5.5M2 6.5h5.5" stroke="#6e6e6e" stroke-width="1"/></svg></span>
<div class="row" style="top:227px"><span class="c" style="left:54px"><span class="t">hotspot/lv/errors.txt</span></span><span class="c tp"><span class="t">.txt file</span></span><span class="c sz"><span class="tr">3810 B</span></span><span class="c dt"><span class="td">Dec/18/2018 09:52:03</span></span></div>
<div class="a" style="left:3px;top:16px;width:1px;height:227px;background:#e6e6e6"></div>
<div class="a" style="left:203px;top:16px;width:1px;height:227px;background:#e6e6e6"></div>
<div class="a" style="left:303px;top:16px;width:1px;height:227px;background:#e6e6e6"></div>
<div class="a" style="left:393px;top:16px;width:1px;height:227px;background:#e6e6e6"></div>
<div class="a" style="left:518px;top:16px;width:1px;height:227px;background:#e6e6e6"></div>
  <div class="a" style="left:521px;top:0;width:17px;height:17px;background:#f0f0f0;border:1px solid #a8a8a8"></div>
  <svg class="a" style="left:524px;top:5px" width="11" height="7" viewBox="0 0 11 7"><path d="M0.5 0.8H9.8L5.15 5.9z" fill="#000"/></svg>
  <div class="a" style="left:521px;top:16px;width:17px;height:227px;background:#d4d4d4;border:1px solid #a8a8a8;border-bottom:0"></div>
  <div class="a" style="left:522px;top:33px;width:15px;height:82px;background:#f0f0f0;border-bottom:1px solid #a8a8a8"></div>
  <div class="a" style="left:521px;top:16px;width:17px;height:17px;background:#f0f0f0;border:1px solid #a8a8a8"></div>
  <svg class="a" style="left:525px;top:21px" width="9" height="7" viewBox="0 0 9 7"><path d="M4.5 0.2L8.8 4.2H6.5V6.8h-4V4.2H0.2z" fill="#000"/></svg>
  <div class="a" style="left:521px;top:226px;width:17px;height:16px;background:#f0f0f0;border:1px solid #a8a8a8;border-bottom:0"></div>
  <svg class="a" style="left:525px;top:231px" width="9" height="7" viewBox="0 0 9 7"><path d="M4.5 6.8L8.8 2.8H6.5V0.2h-4V2.8H0.2z" fill="#000"/></svg>
 </div>
 <div id="status" class="a"><span class="c t" style="left:4px;line-height:20px">35 items (1 selected)</span><span class="c t" style="left:150px;line-height:20px">18.9 MiB of 128.0 MiB used</span><span class="c t" style="left:379px;line-height:20px">85% free</span>
  <div class="a" style="left:145px;top:2px;width:1px;height:17px;background:#a0a0a0"></div>
  <div class="a" style="left:375px;top:2px;width:1px;height:17px;background:#a0a0a0"></div>
 </div>
</div>
<svg class="a" style="left:0;top:0;z-index:10" width="1101" height="541" viewBox="0 0 1101 541">
<defs>
<filter id="sh" x="-20%" y="-30%" width="150%" height="180%"><feGaussianBlur in="SourceAlpha" stdDeviation="2.4"/><feOffset dx="2.5" dy="3.5" result="o"/><feComponentTransfer><feFuncA type="linear" slope="0.6"/></feComponentTransfer><feMerge><feMergeNode/><feMergeNode in="SourceGraphic"/></feMerge></filter>
</defs>
<g filter="url(#sh)"><rect x="19.5" y="277.5" width="117" height="28" fill="none" stroke="#ff0000" stroke-width="3"/></g>
<g filter="url(#sh)"><rect x="173.5" y="160.5" width="165" height="27" fill="none" stroke="#ff0000" stroke-width="3"/></g>
<g filter="url(#sh)">
<path d="M308.82 283.85 L177.30 289.40 L179.44 285.70 Q166.78 288.20 154.20 292.30 Q167.09 295.29 179.91 296.69 L177.46 293.19 L308.98 287.35 A1.75 1.75 0 0 1 308.82 283.85 Z" fill="#f80808"/>
<path d="M466.44 160.41 L385.10 168.33 L386.83 164.53 Q374.04 167.72 361.40 172.50 Q374.73 174.69 387.91 175.28 L385.46 171.91 L466.76 163.59 A1.6 1.6 0 0 1 466.44 160.41 Z" fill="#f80808"/>
</g>
<g filter="url(#sh)"><rect x="480.3" y="147.2" width="96.6" height="39.5" fill="#ffffcf" stroke="#ff0000" stroke-width="2.2"/></g>
<text x="492" y="170" font-family="Liberation Sans" font-weight="bold" font-size="15.8" letter-spacing="0" fill="#000" stroke="#ffffcf" stroke-width="0.22">Paso 4</text>
<g filter="url(#sh)"><rect x="325.1" y="274.3" width="84.8" height="45.4" fill="#ffffcf" stroke="#ff0000" stroke-width="2.2"/></g>
<text x="337.3" y="297" font-family="Liberation Sans" font-weight="bold" font-size="15.8" letter-spacing="0" fill="#000" stroke="#ffffcf" stroke-width="0.22">Paso 3</text>
</svg>
</body></html>
